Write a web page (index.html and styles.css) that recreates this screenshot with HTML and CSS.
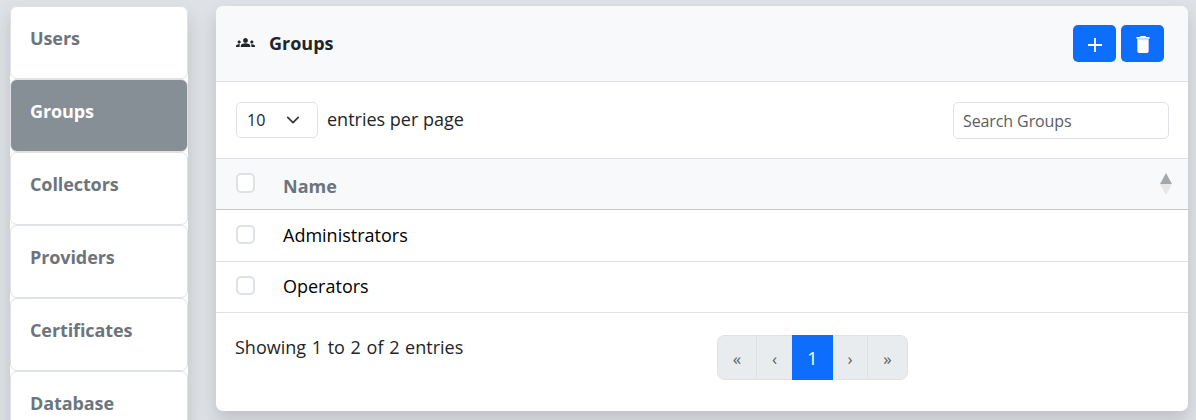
FILE: index.html
```html
<!DOCTYPE html>
<html lang="en">
<head>
<meta charset="utf-8">
<title>Groups</title>
<link rel="stylesheet" href="styles.css">
</head>
<body>
<div class="layout">
  <nav class="sidebar">
    <a class="side-item"><span>Users</span></a>
    <a class="side-item active"><span>Groups</span></a>
    <a class="side-item"><span>Collectors</span></a>
    <a class="side-item"><span>Providers</span></a>
    <a class="side-item"><span>Certificates</span></a>
    <a class="side-item"><span>Database</span></a>
  </nav>
  <main class="card">
    <header class="card-header">
      <svg class="groups-icon" viewBox="0 0 24 12"><path d="M4 7c1.1 0 2-.9 2-2s-.9-2-2-2-2 .9-2 2 .9 2 2 2zm1.13 1.1C4.76 8.04 4.39 8 4 8c-.99 0-1.93.21-2.78.58C.48 8.9 0 9.620 0 10.430V12h4.500v-1.610c0-.83.23-1.610.63-2.290zM20 7c1.100 0 2-.9 2-2s-.9-2-2-2-2 .9-2 2 .9 2 2 2zm4 3.430c0-.81-.48-1.530-1.220-1.850A6.950 6.950 0 0 0 20 8c-.39 0-.76.04-1.130.1.4.68.63 1.460.63 2.290V12H24zM16.240 7.650C15.070 7.130 13.630 6.750 12 6.750s-3.070.39-4.240.9A2.980 2.980 0 0 0 6 10.390V12h12v-1.610c0-1.180-.68-2.260-1.760-2.740zM9 3c0 1.660 1.340 3 3 3s3-1.340 3-3-1.340-3-3-3-3 1.340-3 3z"/></svg>
      <h1 class="card-title">Groups</h1>
      <div class="actions">
        <button class="btn" aria-label="Add"><svg class="plus-icon" viewBox="0 0 14 14"><path d="M6.100 0h1.800v6.100H14v1.800H7.900V14H6.100V7.900H0V6.100h6.100z"/></svg></button>
        <button class="btn" aria-label="Delete"><svg class="trash-icon" viewBox="0 0 14 18"><path d="M1 4h12v12a2 2 0 0 1-2 2H3a2 2 0 0 1-2-2z"/><path d="M4.500 0h5l1 1H14v2H0V1h3.500z"/><path class="lid-gap" d="M1 3h12v1.500H1z"/></svg></button>
      </div>
    </header>
    <div class="toolbar">
      <div class="select"><span>10</span><svg class="chevron" viewBox="0 0 16 16"><path d="m2 5 6 6 6-6"/></svg></div>
      <span class="per-page">entries per page</span>
      <input class="search" placeholder="Search Groups">
    </div>
    <div class="row head">
      <span class="check"></span><span class="name">Name</span>
      <svg class="sort" viewBox="0 0 12 22"><path class="up" d="M6 0l6 11H0z"/><path class="down" d="M0 11h12L6 22z"/></svg>
    </div>
    <div class="row first"><span class="check"></span><span class="name">Administrators</span></div>
    <div class="row"><span class="check"></span><span class="name">Operators</span></div>
    <footer class="footer">
      <span class="info">Showing 1 to 2 of 2 entries</span>
      <div class="pages">
        <span class="page end">«</span><span class="page mid">‹</span><span class="page current">1</span><span class="page mid next">›</span><span class="page end">»</span>
      </div>
    </footer>
  </main>
</div>
</body>
</html>
```
FILE: styles.css
```css
* { box-sizing: border-box; }
body {
  margin: 0;
  background: #dee2e6;
  color: #212529;
  font: 18px/27px "Open Sans", "Noto Sans", sans-serif;
}
.layout {
  display: flex;
  align-items: flex-start;
  gap: 28px;
  height: 420px;
  padding: 6px 8px 0 10px;
  overflow: hidden;
}
.sidebar {
  width: 178px;
  background: #fff;
  border-radius: 7px;
  box-shadow: 0 9px 18px rgba(0, 0, 0, .15);
}
.side-item {
  display: block;
  height: 73px;
  padding: 18px 19px;
  border: 1px solid #dee2e6;
  border-radius: 7px;
  color: #6c757d;
  font-weight: 700;
  letter-spacing: -.1px;
}
.side-item.active { background: #868e96; color: #fff; }
.card {
  width: 972px;
  height: 405px;
  background: #fff;
  border-radius: 7px;
  box-shadow: 0 9px 18px rgba(0, 0, 0, .15);
}
.card-header {
  display: flex;
  align-items: center;
  height: 76px;
  padding: 0 24px 0 20px;
  border-bottom: 1px solid #dee2e6;
  border-radius: 7px 7px 0 0;
  background: #f8f9fa;
}
.groups-icon { width: 19px; height: 9.500px; margin-top: -2px; fill: #212529; }
.card-title { margin: 0 0 0 14px; font-size: 18px; font-weight: 700; }
.actions { display: flex; gap: 5px; margin-left: auto; }
.btn {
  display: flex;
  align-items: center;
  justify-content: center;
  width: 43px;
  height: 37px;
  padding: 2px 0 0 1px;
  border: 0;
  border-radius: 5px;
  background: #0d6efd;
}
.plus-icon { width: 14px; height: 14px; fill: #fff; }
.trash-icon { width: 14px; height: 17px; fill: #fff; }
.lid-gap { fill: #cfe2ff; }
.toolbar { display: flex; align-items: flex-start; height: 76px; padding: 20px 19px 0 20px; }
.select {
  display: flex;
  align-items: center;
  justify-content: space-between;
  width: 82px;
  height: 36px;
  padding: 0 17px 0 10px;
  border: 1px solid #dee2e6;
  border-radius: 5px;
  font-size: 16px;
}
.chevron { width: 14px; height: 14px; fill: none; stroke: #343a40; stroke-width: 2; stroke-linecap: round; stroke-linejoin: round; }
.per-page { margin: 4px 0 0 9px; }
.search {
  width: 216px;
  height: 37px;
  margin-left: auto;
  padding: 1px 9px 0;
  border: 1px solid #dee2e6;
  border-radius: 5px;
  background: #fff;
  font: 16px "Open Sans", "Noto Sans", sans-serif;
  letter-spacing: -.1px;
}
.search::placeholder { color: #595c5f; opacity: 1; }
.row {
  display: flex;
  align-items: flex-start;
  height: 51px;
  padding: 14px 16px 0 20px;
  border-bottom: 1px solid #dee2e6;
  color: #000;
}
.row.first { height: 52px; padding-top: 15px; }
.row.head {
  height: 52px;
  border-top: 1px solid #dee2e6;
  border-bottom-color: #c6c7c8;
  background: #f8f9fa;
}
.check { width: 19px; height: 19px; border: 2px solid #dee2e6; border-radius: 5px; background: #fff; }
.head .check { height: 20px; }
.name { margin: -3px 0 0 28px; }
.head .name { margin-top: 0; color: #6c757d; font-weight: 700; }
.sort { width: 12px; height: 22px; margin-left: auto; }
.up { fill: #a5a8ab; }
.down { fill: #e6e7e8; }
.footer { display: flex; align-items: flex-start; padding: 22px 20px 0 19px; }
.info { width: 482px; margin-top: -1px; word-spacing: 1px; }
.pages { display: flex; height: 45px; border-radius: 7px; overflow: hidden; }
.page {
  display: flex;
  align-items: center;
  justify-content: center;
  padding-top: 1px;
  background: #e9ecef;
  border: 1px solid #dee2e6;
  color: #595c5f;
  font-size: 17px;
}
.end { width: 40px; }
.end:first-child { border-radius: 7px 0 0 7px; }
.end:last-child { border-left: 0; border-radius: 0 7px 7px 0; }
.mid { width: 35px; border-left: 0; border-right: 0; }
.next { border-right: 1px solid #dee2e6; }
.current { width: 41px; border-color: #0d6efd; background: #0d6efd; color: #fff; font-size: 18px; }
```
